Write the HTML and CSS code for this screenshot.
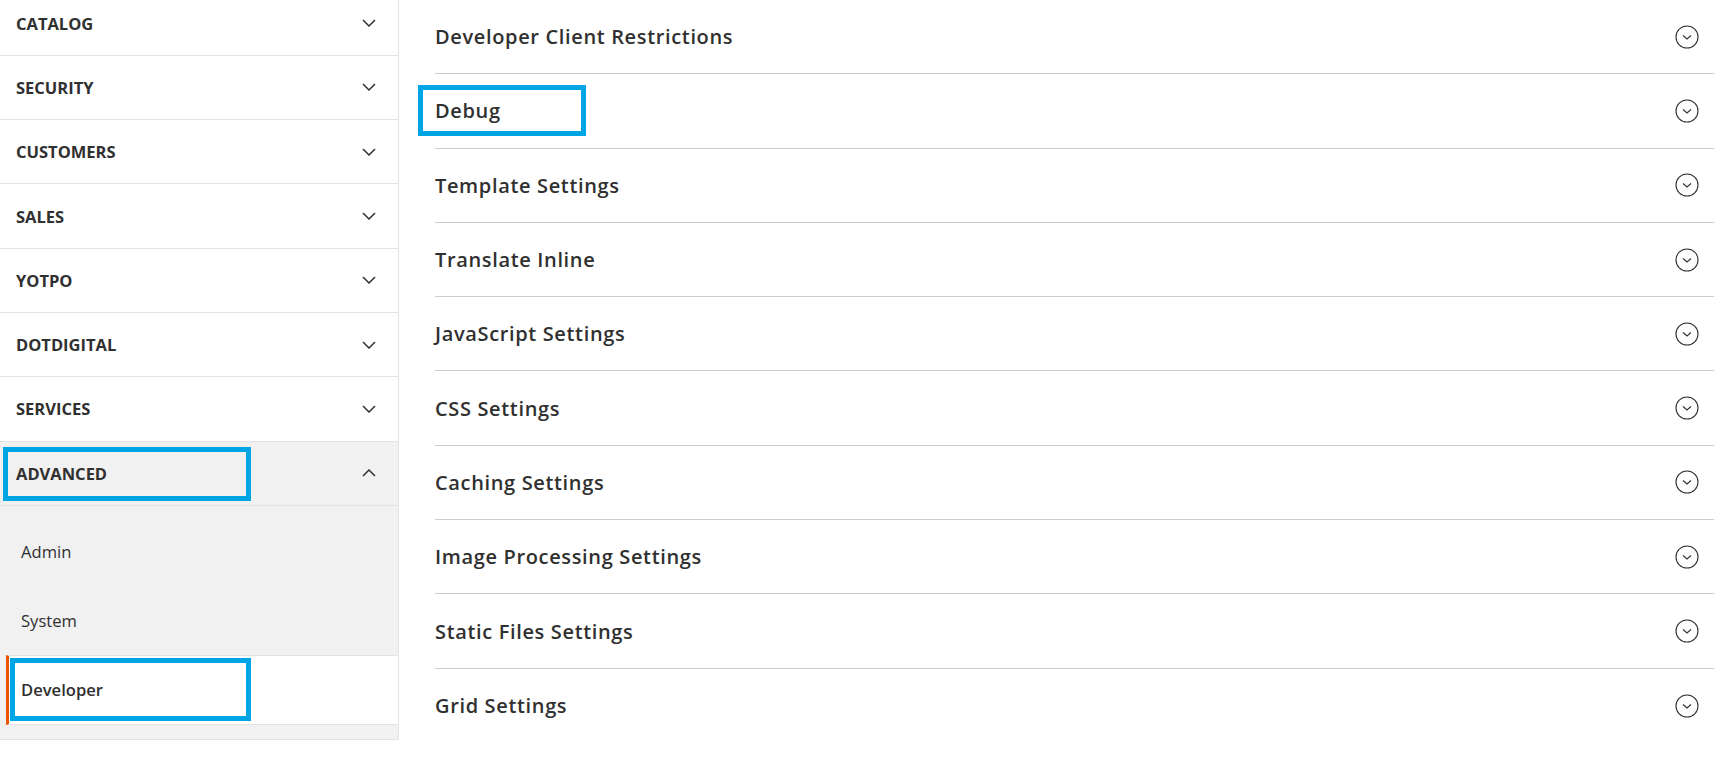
FILE: index.html
```html
<!DOCTYPE html>
<html lang="en">
<head>
<meta charset="utf-8">
<title>Configuration - Advanced - Developer</title>
<link rel="stylesheet" href="styles.css">
</head>
<body>
<div class="page">
  <nav class="nav">
    <div class="nav-group">
      <div class="nav-title"><strong>CATALOG</strong><svg class="chev" viewBox="0 0 14 8" width="14" height="8"><polyline points="1,1 7,7 13,1"/></svg></div>
    </div>
    <div class="nav-group">
      <div class="nav-title"><strong>SECURITY</strong><svg class="chev" viewBox="0 0 14 8" width="14" height="8"><polyline points="1,1 7,7 13,1"/></svg></div>
    </div>
    <div class="nav-group">
      <div class="nav-title"><strong>CUSTOMERS</strong><svg class="chev" viewBox="0 0 14 8" width="14" height="8"><polyline points="1,1 7,7 13,1"/></svg></div>
    </div>
    <div class="nav-group">
      <div class="nav-title"><strong>SALES</strong><svg class="chev" viewBox="0 0 14 8" width="14" height="8"><polyline points="1,1 7,7 13,1"/></svg></div>
    </div>
    <div class="nav-group">
      <div class="nav-title"><strong>YOTPO</strong><svg class="chev" viewBox="0 0 14 8" width="14" height="8"><polyline points="1,1 7,7 13,1"/></svg></div>
    </div>
    <div class="nav-group">
      <div class="nav-title"><strong>DOTDIGITAL</strong><svg class="chev" viewBox="0 0 14 8" width="14" height="8"><polyline points="1,1 7,7 13,1"/></svg></div>
    </div>
    <div class="nav-group">
      <div class="nav-title"><strong>SERVICES</strong><svg class="chev" viewBox="0 0 14 8" width="14" height="8"><polyline points="1,1 7,7 13,1"/></svg></div>
    </div>
    <div class="nav-group open">
      <div class="nav-title"><strong>ADVANCED</strong><svg class="chev" viewBox="0 0 14 8" width="14" height="8"><polyline points="1,7 7,1 13,7"/></svg></div>
      <ul class="nav-items">
        <li class="nav-item"><a>Admin</a></li>
        <li class="nav-item"><a>System</a></li>
        <li class="nav-item active"><a>Developer</a></li>
      </ul>
    </div>
  </nav>

  <main class="main">
    <div class="section"><span class="section-title">Developer Client Restrictions</span><svg class="circ" viewBox="0 0 24 24" width="24" height="24"><circle cx="12" cy="12" r="11"/><polyline points="8,10.5 12,14 16,10.5"/></svg></div>
    <div class="section"><span class="section-title">Debug</span><svg class="circ" viewBox="0 0 24 24" width="24" height="24"><circle cx="12" cy="12" r="11"/><polyline points="8,10.5 12,14 16,10.5"/></svg></div>
    <div class="section"><span class="section-title">Template Settings</span><svg class="circ" viewBox="0 0 24 24" width="24" height="24"><circle cx="12" cy="12" r="11"/><polyline points="8,10.5 12,14 16,10.5"/></svg></div>
    <div class="section"><span class="section-title">Translate Inline</span><svg class="circ" viewBox="0 0 24 24" width="24" height="24"><circle cx="12" cy="12" r="11"/><polyline points="8,10.5 12,14 16,10.5"/></svg></div>
    <div class="section"><span class="section-title">JavaScript Settings</span><svg class="circ" viewBox="0 0 24 24" width="24" height="24"><circle cx="12" cy="12" r="11"/><polyline points="8,10.5 12,14 16,10.5"/></svg></div>
    <div class="section"><span class="section-title">CSS Settings</span><svg class="circ" viewBox="0 0 24 24" width="24" height="24"><circle cx="12" cy="12" r="11"/><polyline points="8,10.5 12,14 16,10.5"/></svg></div>
    <div class="section"><span class="section-title">Caching Settings</span><svg class="circ" viewBox="0 0 24 24" width="24" height="24"><circle cx="12" cy="12" r="11"/><polyline points="8,10.5 12,14 16,10.5"/></svg></div>
    <div class="section"><span class="section-title">Image Processing Settings</span><svg class="circ" viewBox="0 0 24 24" width="24" height="24"><circle cx="12" cy="12" r="11"/><polyline points="8,10.5 12,14 16,10.5"/></svg></div>
    <div class="section"><span class="section-title">Static Files Settings</span><svg class="circ" viewBox="0 0 24 24" width="24" height="24"><circle cx="12" cy="12" r="11"/><polyline points="8,10.5 12,14 16,10.5"/></svg></div>
    <div class="section"><span class="section-title">Grid Settings</span><svg class="circ" viewBox="0 0 24 24" width="24" height="24"><circle cx="12" cy="12" r="11"/><polyline points="8,10.5 12,14 16,10.5"/></svg></div>
  </main>

  <div class="annot annot-advanced"></div>
  <div class="annot annot-developer"></div>
  <div class="annot annot-debug"></div>
</div>
</body>
</html>
```

FILE: styles.css
```css
* { box-sizing: border-box; }

html, body {
  margin: 0;
  padding: 0;
  background: #ffffff;
  overflow: hidden;
}

body {
  font-family: "Open Sans", "Liberation Sans", sans-serif;
  color: #303030;
}

.page {
  position: relative;
  display: flex;
  align-items: flex-start;
  width: 1732px;
  height: 763px;
}

/* ---------- Sidebar ---------- */
.nav {
  flex: none;
  width: 399px;
  margin-top: -8.5px;
  border-right: 1px solid #e3e3e3;
}

.nav-title {
  height: 64.3px;
  display: flex;
  align-items: center;
  justify-content: space-between;
  padding: 0 22px 0 16px;
  border-bottom: 1px solid #e3e3e3;
}

.nav-title strong {
  font-size: 16.5px;
  font-weight: 700;
  color: #303030;
}

.chev {
  display: block;
  fill: none;
  stroke: #303030;
  stroke-width: 1.5;
}

.nav-group.open .nav-title {
  background: #f1f1f1;
}

.nav-items {
  list-style: none;
  margin: 0;
  padding: 11px 0 14px;
  background: #f1f1f1;
  border-bottom: 1px solid #e3e3e3;
}

.nav-item {
  height: 69px;
  margin-left: 6px;
  border-left: 3px solid transparent;
  padding-left: 12px;
  display: flex;
  align-items: center;
}

.nav-item a {
  font-size: 16.6px;
  font-weight: 400;
  color: #303030;
}

.nav-item.active {
  height: 70px;
  background: #ffffff;
  border-left-color: #eb5202;
  border-top: 1px solid #e3e3e3;
  border-bottom: 1px solid #e3e3e3;
}

.nav-item.active a {
  font-weight: 600;
}

/* ---------- Main ---------- */
.main {
  flex: 1;
  margin-left: 36px;
  margin-right: 18px;
}

.section {
  height: 74.3px;
  display: flex;
  align-items: center;
  justify-content: space-between;
  padding-right: 15px;
  border-bottom: 1px solid #cccccc;
}

.section:last-child {
  border-bottom: none;
}

.section-title {
  font-size: 20px;
  font-weight: 600;
  letter-spacing: 0.65px;
  color: #303030;
}

.circ {
  display: block;
  fill: none;
  stroke: #303030;
  stroke-width: 1.1;
}

/* ---------- Annotation highlights ---------- */
.annot {
  position: absolute;
  border: 5px solid #00a5e6;
}

.annot-advanced {
  left: 3px;
  top: 447px;
  width: 248px;
  height: 54px;
}

.annot-developer {
  left: 10px;
  top: 658px;
  width: 241px;
  height: 63px;
}

.annot-debug {
  left: 418px;
  top: 85px;
  width: 168px;
  height: 51px;
}
```
